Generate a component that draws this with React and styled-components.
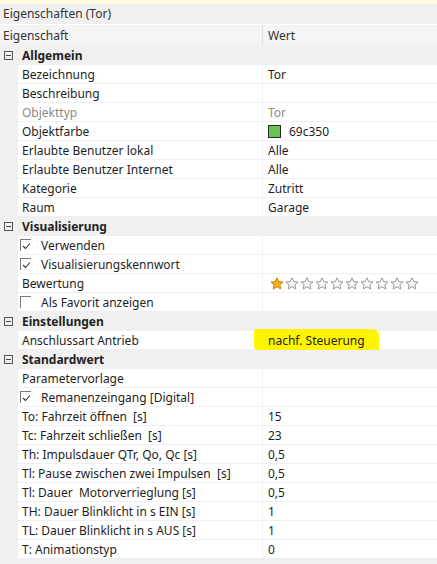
import React from "react";
import styled, { createGlobalStyle } from "styled-components";

const Global = createGlobalStyle`
  html, body {
    margin: 0;
    padding: 0;
    background: #f0f0f0;
  }
  body {
    font-family: "Noto Sans", "Open Sans", sans-serif;
    font-size: 12px;
    color: #1e1e1e;
  }
`;

const NAME_W = 263;

const Panel = styled.div`
  width: 437px;
  height: 564px;
  background: #f0f0f0;
  display: flex;
  flex-direction: column;
  overflow: hidden;
`;

const TopStrip = styled.div`
  height: 4px;
  background: #fffce0;
`;

const Title = styled.div`
  height: 20px;
  line-height: 20px;
  padding-left: 3px;
  background: #f0f0f0;
  color: #333;
`;

const Header = styled.div`
  height: 21px;
  display: flex;
  background: #f4f4f4;
  border-top: 1px solid #ffffff;
  color: #333;
`;

const HeaderCell = styled.div`
  width: ${(p) => (p.$first ? `${NAME_W}px` : "auto")};
  flex: ${(p) => (p.$first ? "none" : "1")};
  padding-left: ${(p) => (p.$first ? "3px" : "5px")};
  line-height: 21px;
  box-sizing: border-box;
  border-right: ${(p) => (p.$first ? "1px solid #e2e2e2" : "none")};
`;

const Grid = styled.div`
  display: flex;
  flex-direction: column;
`;

const CategoryRow = styled.div`
  height: 19px;
  display: flex;
  align-items: center;
  background: #f0f0f0;
  font-weight: 700;
  color: #222;
`;

const Toggle = styled.span`
  width: 9px;
  height: 9px;
  box-sizing: border-box;
  border: 1px solid #555;
  margin: 0 9px 0 4px;
  position: relative;
  &::after {
    content: "";
    position: absolute;
    left: 1px;
    top: 3px;
    width: 5px;
    height: 1px;
    background: #444;
  }
`;

const Row = styled.div`
  height: 19px;
  display: flex;
  padding-left: 18px;
  background: #f0f0f0;
`;

const NameCell = styled.div`
  width: ${NAME_W - 18}px;
  flex: none;
  display: flex;
  align-items: center;
  box-sizing: border-box;
  padding-left: ${(p) => (p.$check ? "2px" : "4px")};
  background: #fff;
  border-bottom: 1px solid #f0f0f0;
  border-right: 1px solid #f0f0f0;
  color: ${(p) => (p.$muted ? "#8a8a8a" : "#1e1e1e")};
  white-space: pre;
  overflow: hidden;
`;

const ValueCell = styled.div`
  flex: 1;
  display: flex;
  align-items: center;
  padding-left: 5px;
  background: #fff;
  border-bottom: 1px solid #f0f0f0;
  color: ${(p) => (p.$muted ? "#8a8a8a" : "#1e1e1e")};
  white-space: pre;
`;

const Box = styled.span`
  width: 11px;
  height: 12px;
  box-sizing: border-box;
  border-top: 1px solid #7a7a7a;
  border-left: 1px solid #7a7a7a;
  margin-right: 10px;
  display: flex;
  align-items: center;
  justify-content: center;
`;

const Swatch = styled.span`
  width: 13px;
  height: 13px;
  box-sizing: border-box;
  background: #69c350;
  border: 1px solid #2a2a2a;
  margin-right: 8px;
`;

const Stars = styled.span`
  display: flex;
  gap: 1px;
  margin-left: 2px;
`;

const Marker = styled.span`
  background: #fff500;
  padding: 3px 14px 3px 14px;
  margin-left: -14px;
  border-radius: 3px 6px 4px 6px;
`;

const Check = () => (
  <svg width="9" height="8" viewBox="0 0 9 8">
    <path d="M1 4 L3.5 6.5 L8 1.5" fill="none" stroke="#333" strokeWidth="1.1" />
  </svg>
);

const Star = ({ on }) => (
  <svg width="14" height="13" viewBox="0 0 14 13">
    <path
      d="M7 0.8 L8.8 4.6 L13 5 L9.9 7.8 L10.8 12 L7 9.8 L3.2 12 L4.1 7.8 L1 5 L5.2 4.6 Z"
      fill={on ? "#f0b21b" : "#f4f4f4"}
      stroke={on ? "#c98a10" : "#9a9a9a"}
      strokeWidth="1"
      strokeLinejoin="round"
    />
  </svg>
);

const data = [
  { cat: "Allgemein" },
  { name: "Bezeichnung", value: "Tor" },
  { name: "Beschreibung" },
  { name: "Objekttyp", value: "Tor", muted: true },
  { name: "Objektfarbe", value: "69c350", swatch: true },
  { name: "Erlaubte Benutzer lokal", value: "Alle" },
  { name: "Erlaubte Benutzer Internet", value: "Alle" },
  { name: "Kategorie", value: "Zutritt" },
  { name: "Raum", value: "Garage" },
  { cat: "Visualisierung" },
  { name: "Verwenden", check: true, checked: true },
  { name: "Visualisierungskennwort", check: true, checked: true },
  { name: "Bewertung", stars: 1 },
  { name: "Als Favorit anzeigen", check: true },
  { cat: "Einstellungen" },
  { name: "Anschlussart Antrieb", value: "nachf. Steuerung", marker: true },
  { cat: "Standardwert" },
  { name: "Parametervorlage" },
  { name: "Remanenzeingang [Digital]", check: true, checked: true },
  { name: "To: Fahrzeit öffnen  [s]", value: "15" },
  { name: "Tc: Fahrzeit schließen  [s]", value: "23" },
  { name: "Th: Impulsdauer QTr, Qo, Qc [s]", value: "0,5" },
  { name: "Tl: Pause zwischen zwei Impulsen  [s]", value: "0,5" },
  { name: "Tl: Dauer  Motorverrieglung [s]", value: "0,5" },
  { name: "TH: Dauer Blinklicht in s EIN [s]", value: "1" },
  { name: "TL: Dauer Blinklicht in s AUS [s]", value: "1" },
  { name: "T: Animationstyp", value: "0" },
];

const renderValue = (r) => {
  if (r.swatch)
    return (
      <>
        <Swatch />
        {r.value}
      </>
    );
  if (r.stars != null)
    return (
      <Stars>
        {Array.from({ length: 10 }, (_, i) => (
          <Star key={i} on={i < r.stars} />
        ))}
      </Stars>
    );
  if (r.marker) return <Marker>{r.value}</Marker>;
  return r.value;
};

export default function App() {
  return (
    <>
      <Global />
      <Panel>
        <TopStrip />
        <Title>Eigenschaften (Tor)</Title>
        <Header>
          <HeaderCell $first>Eigenschaft</HeaderCell>
          <HeaderCell>Wert</HeaderCell>
        </Header>
        <Grid>
          {data.map((r, i) =>
            r.cat ? (
              <CategoryRow key={i}>
                <Toggle />
                {r.cat}
              </CategoryRow>
            ) : (
              <Row key={i}>
                <NameCell $check={r.check} $muted={r.muted}>
                  {r.check && <Box>{r.checked && <Check />}</Box>}
                  {r.name}
                </NameCell>
                <ValueCell $muted={r.muted}>{renderValue(r)}</ValueCell>
              </Row>
            )
          )}
        </Grid>
      </Panel>
    </>
  );
}
